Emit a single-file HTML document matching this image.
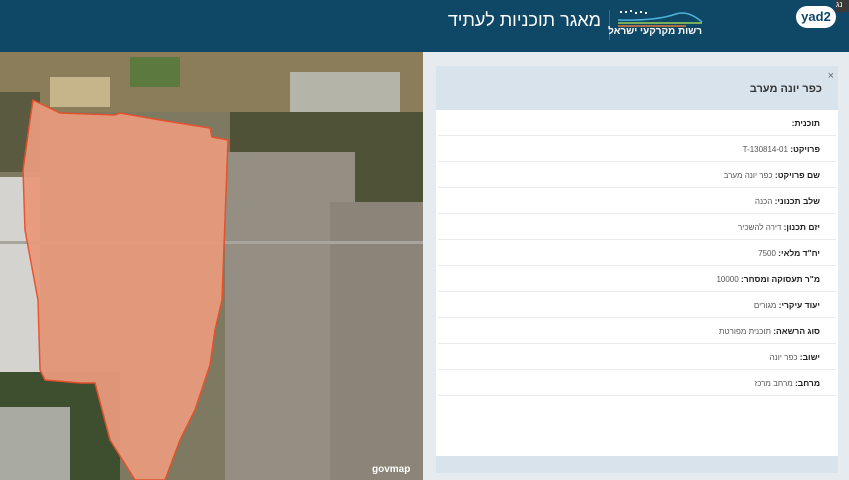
<!DOCTYPE html>
<html><head><meta charset="utf-8"><style>
*{margin:0;padding:0;box-sizing:border-box}
html,body{width:849px;height:480px;overflow:hidden}
body{font-family:"Liberation Sans","Noto Sans CJK SC",sans-serif;background:#e6ebef;position:relative}
.hdr{position:absolute;left:0;top:0;width:849px;height:52px;background:#0f4767;overflow:hidden}
.map{position:absolute;left:0;top:52px;width:423px;height:428px;overflow:hidden;background:#7e7a62}
.panel{position:absolute;left:423px;top:52px;width:426px;height:428px;background:#e6ebef}
.card{position:absolute;left:436px;top:66px;width:402px;height:390px;background:#fff;overflow:hidden}
.ch{height:44px;background:#d8e3ec;position:relative;direction:rtl}
.ch h1{position:absolute;right:16px;top:17px;font-size:11px;font-weight:bold;color:#333}
.x{position:absolute;right:4px;top:4px;font-size:11px;color:#666}
.row{height:26px;border-bottom:1px solid #e8ecef;direction:rtl;padding-right:16px;font-size:8px;color:#555;line-height:27px;margin:0 2px;white-space:nowrap}
.row b{color:#222;font-size:8.5px}
.ft{position:absolute;left:436px;top:456px;width:402px;height:17px;background:#d8e3ec}
</style></head><body>
<div class="hdr">
<div style="position:absolute;left:440px;top:10px;color:#fff;font-size:18px;direction:rtl;width:161px;text-align:right;white-space:nowrap">מאגר תוכניות לעתיד</div>
<div style="position:absolute;left:609px;top:10px;width:1px;height:30px;background:#3d6a85"></div>
<svg style="position:absolute;left:616px;top:8px" width="90" height="22"><g fill="#fff"><rect x="4" y="3" width="2" height="2"/><rect x="9" y="3" width="2" height="2"/><rect x="14" y="2" width="2" height="2"/><rect x="19" y="4" width="2" height="2"/><rect x="24" y="3" width="2" height="2"/><rect x="29" y="4" width="2" height="2"/></g><path d="M2 12 Q40 13 60 6 Q72 2 86 14" stroke="#4fb3d9" stroke-width="1.5" fill="none"/><path d="M2 15 L86 15" stroke="#9ccf5a" stroke-width="1.5"/><path d="M2 18 L70 18" stroke="#e07a3a" stroke-width="1.5"/></svg>
<div style="position:absolute;left:600px;top:26px;width:102px;color:#fff;font-size:10px;font-weight:bold;direction:rtl;text-align:right;white-space:nowrap">רשות מקרקעי ישראל</div>
<div style="position:absolute;left:796px;top:6px;width:40px;height:22px;background:#fff;border-radius:11px;color:#0f4767;font-size:13px;font-weight:bold;text-align:center;line-height:22px">yad2</div>
<div style="position:absolute;left:836px;top:0;width:13px;height:12px;background:#3a3a3a;color:#fff;font-size:8px">נג</div>
</div>
<div class="map">
<div style="position:absolute;left:0;top:0;width:423px;height:60px;background:#8b7d5a"></div>
<div style="position:absolute;left:50px;top:25px;width:60px;height:30px;background:#c6b48a"></div>
<div style="position:absolute;left:130px;top:5px;width:50px;height:30px;background:#5c7a3f"></div>
<div style="position:absolute;left:290px;top:20px;width:110px;height:60px;background:#b5b4a8"></div>
<div style="position:absolute;left:230px;top:60px;width:193px;height:130px;background:#4f5236"></div>
<div style="position:absolute;left:225px;top:100px;width:130px;height:328px;background:#948f82"></div>
<div style="position:absolute;left:330px;top:150px;width:93px;height:278px;background:#8a8578"></div>
<div style="position:absolute;left:0;top:40px;width:40px;height:80px;background:#5a5a40"></div>
<div style="position:absolute;left:0;top:125px;width:40px;height:195px;background:#d5d3cf"></div>
<div style="position:absolute;left:0;top:320px;width:120px;height:108px;background:#3e4f30"></div>
<div style="position:absolute;left:0;top:355px;width:70px;height:73px;background:#a9aaa2"></div>
<div style="position:absolute;left:0;top:189px;width:423px;height:3px;background:#a7a59d"></div>
<svg style="position:absolute;left:0;top:0" width="423" height="428" viewBox="0 52 423 428"><polygon points="33,100 60,113 115,115 120,113 160,120 210,128 212,137 228,140 222,300 215,330 210,365 195,410 180,440 165,480 135,480 110,440 95,383 80,383 45,380 40,370 38,300 25,230 23,170 30,120" fill="#e89a7c" stroke="#e8502a" stroke-width="1.5" opacity="0.95"/></svg>
<div style="position:absolute;left:372px;top:412px;color:#fff;font-size:10px;font-weight:bold">govmap</div>
</div>
<div class="panel"></div>
<div class="card">
<div class="ch"><span class="x">×</span><h1>כפר יונה מערב</h1></div>
<div class="row"><b>תוכנית:</b></div>
<div class="row"><b>פרויקט:</b> T-130814-01</div>
<div class="row"><b>שם פרויקט:</b> כפר יונה מערב</div>
<div class="row"><b>שלב תכנוני:</b> הכנה</div>
<div class="row"><b>יזם תכנון:</b> דירה להשכיר</div>
<div class="row"><b>יח"ד מלאי:</b> 7500</div>
<div class="row"><b>מ"ר תעסוקה ומסחר:</b> 10000</div>
<div class="row"><b>יעוד עיקרי:</b> מגורים</div>
<div class="row"><b>סוג הרשאה:</b> תוכנית מפורטת</div>
<div class="row"><b>ישוב:</b> כפר יונה</div>
<div class="row"><b>מרחב:</b> מרחב מרכז</div>
</div>
<div class="ft"></div>
</body></html>
